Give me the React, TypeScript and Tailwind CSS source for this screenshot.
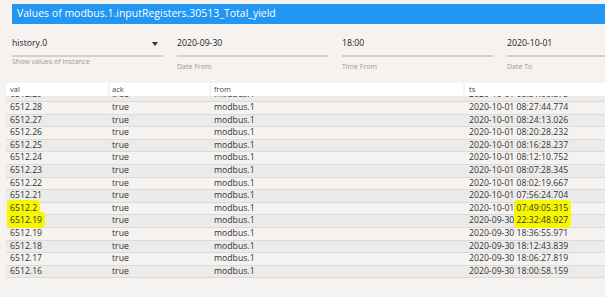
const rows = [
  { val: "6512.29", ts: "2020-10-01 08:31:00.873" },
  { val: "6512.28", ts: "2020-10-01 08:27:44.774" },
  { val: "6512.27", ts: "2020-10-01 08:24:13.026" },
  { val: "6512.26", ts: "2020-10-01 08:20:28.232" },
  { val: "6512.25", ts: "2020-10-01 08:16:28.237" },
  { val: "6512.24", ts: "2020-10-01 08:12:10.752" },
  { val: "6512.23", ts: "2020-10-01 08:07:28.345" },
  { val: "6512.22", ts: "2020-10-01 08:02:19.667" },
  { val: "6512.21", ts: "2020-10-01 07:56:24.704" },
  { val: "6512.2", ts: "2020-10-01 07:49:05.315", mark: true },
  { val: "6512.19", ts: "2020-09-30 22:32:48.927", mark: true },
  { val: "6512.19", ts: "2020-09-30 18:36:55.971" },
  { val: "6512.18", ts: "2020-09-30 18:12:43.839" },
  { val: "6512.17", ts: "2020-09-30 18:06:27.819" },
  { val: "6512.16", ts: "2020-09-30 18:00:58.159" },
];

function Mark({ children }: { children: React.ReactNode }) {
  return <span className="bg-[#f7f700] rounded-[4px] -mx-[3px] px-[3px] py-[2px]">{children}</span>;
}

function Field({ value, label, low, arrow }: { value: string; label: string; low?: boolean; arrow?: boolean }) {
  return (
    <div className="w-[151px] shrink-0">
      <div className="h-[18px] flex items-start justify-between text-[8.7px] leading-[12px] text-[#222]">
        <span>{value}</span>
        {arrow && (
          <svg width="6" height="4" viewBox="0 0 6 4" className="mt-[5px] mr-[5px]">
            <path d="M0 0h6L3 4z" fill="#333" />
          </svg>
        )}
      </div>
      <div className="h-[2px] bg-[#d2d0ce]" />
      <div className={`text-[7px] leading-[8px] text-[#9b9998] ${low ? "mt-[6px]" : "mt-[1px]"}`}>{label}</div>
    </div>
  );
}

export default function App() {
  return (
    <div className="w-[605px] h-[297px] overflow-hidden bg-[#f5f2ef] font-['Open_Sans',sans-serif]">
      <div className="pt-[4px] pl-[12px]">
        <div className="h-[20px] bg-[#2196f3] text-white text-[10.5px] pl-[5px] flex items-center">
          Values of modbus.1.inputRegisters.30513_Total_yield
        </div>
      </div>

      <div className="mt-[13px] pl-[12px] flex gap-[14px] h-[46px]">
        <Field value="history.0" label="Show values of instance" arrow />
        <Field value="2020-09-30" label="Date From" low />
        <Field value="18:00" label="Time From" low />
        <Field value="2020-10-01" label="Date To" low />
      </div>

      <div className="ml-[6px]">
        <div className="grid grid-cols-[102px_99px_252px_1fr] gap-x-[2px] h-[13px] text-[7.5px] leading-[13px] text-[#444]">
          <div className="bg-white pl-[4px]">val</div>
          <div className="bg-white pl-[2px]">ack</div>
          <div className="bg-white pl-[3px]">from</div>
          <div className="bg-white pl-[4px]">ts</div>
        </div>
        <div className="h-[201px] overflow-hidden">
          <div className="-mt-[6.6px]">
            {rows.map((r, i) => {
              const [d, t] = r.ts.split(" ");
              return (
                <div
                  key={i}
                  className={`grid grid-cols-[104px_101px_254px_1fr] h-[12.6px] border-b border-[#dcdad8] text-[8.7px] leading-[11.6px] text-[#333] ${
                    i % 2 === 0 ? "bg-[#ebebeb]" : "bg-[#f5f2ef]"
                  }`}
                >
                  <div className="pl-[4px]">{r.mark ? <Mark>{r.val}</Mark> : r.val}</div>
                  <div className="pl-[2px]">true</div>
                  <div className="pl-[3px]">modbus.1</div>
                  <div className="pl-[4px]">
                    {d} {r.mark ? <Mark>{t}</Mark> : t}
                  </div>
                </div>
              );
            })}
          </div>
        </div>
      </div>
    </div>
  );
}
